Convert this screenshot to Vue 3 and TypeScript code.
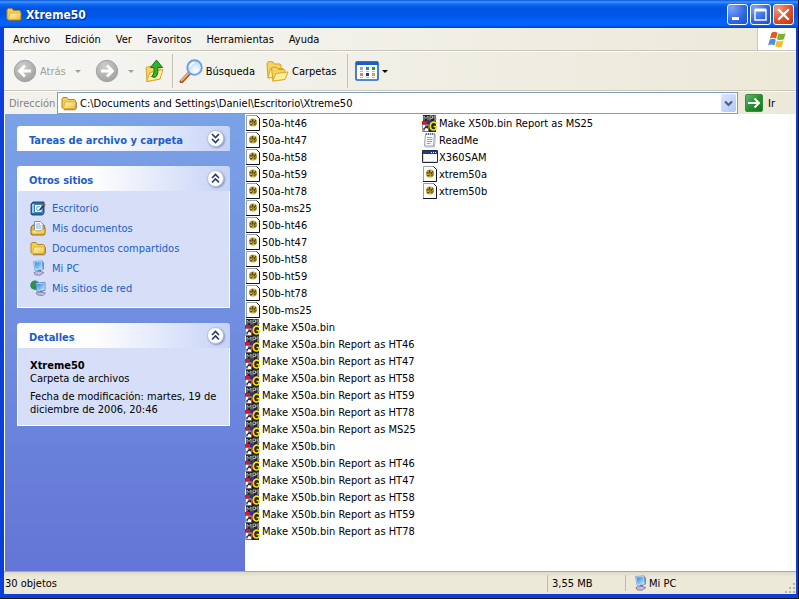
<script setup lang="ts">
import { ref } from 'vue'

interface FileItem {
  name: string
  icon: string
}

const menus: string[] = ['Archivo', 'Edición', 'Ver', 'Favoritos', 'Herramientas', 'Ayuda']

const models: string[] = ['ht46', 'ht47', 'ht58', 'ht59', 'ht78', 'ms25']
const images: FileItem[] = ['50a', '50b'].flatMap((p) =>
  models.map((m) => ({ name: `${p}-${m}`, icon: 'image' })),
)
const scripts: FileItem[] = ['X50a', 'X50b'].flatMap((p) => [
  { name: `Make ${p}.bin`, icon: 'shortcut' },
  ...models.map((m) => ({ name: `Make ${p}.bin Report as ${m.toUpperCase()}`, icon: 'shortcut' })),
])
const files: FileItem[] = [
  ...images,
  ...scripts,
  { name: 'ReadMe', icon: 'notes' },
  { name: 'X360SAM', icon: 'program' },
  { name: 'xtrem50a', icon: 'image' },
  { name: 'xtrem50b', icon: 'image' },
]

const places: FileItem[] = [
  { name: 'Escritorio', icon: 'desktop' },
  { name: 'Mis documentos', icon: 'documents' },
  { name: 'Documentos compartidos', icon: 'folder' },
  { name: 'Mi PC', icon: 'computer' },
  { name: 'Mis sitios de red', icon: 'network' },
]

const address = ref('C:\\Documents and Settings\\Daniel\\Escritorio\\Xtreme50')
const placesOpen = ref(true)
const detailsOpen = ref(true)
</script>

<template>
  <svg class="sprite" aria-hidden="true">
    <defs>
      <linearGradient id="g-folder" x1="0" y1="0" x2="1" y2="1">
        <stop offset="0" stop-color="#fff9b8" />
        <stop offset="1" stop-color="#eebd3c" />
      </linearGradient>
      <linearGradient id="g-screen" x1="0" y1="0" x2="1" y2="1">
        <stop offset="0" stop-color="#2f83e4" />
        <stop offset="1" stop-color="#a9f0ff" />
      </linearGradient>
      <radialGradient id="g-gray" cx="0.4" cy="0.3" r="0.8">
        <stop offset="0" stop-color="#cfcfcd" />
        <stop offset="1" stop-color="#9c9c9a" />
      </radialGradient>
      <radialGradient id="g-lens" cx="0.6" cy="0.7" r="0.8">
        <stop offset="0" stop-color="#ffffff" />
        <stop offset="1" stop-color="#9fd0f8" />
      </radialGradient>
      <linearGradient id="g-go" x1="0" y1="0" x2="1" y2="1">
        <stop offset="0" stop-color="#6cb870" />
        <stop offset="0.5" stop-color="#259032" />
        <stop offset="1" stop-color="#0d7417" />
      </linearGradient>
    </defs>
    <symbol id="i-folder" viewBox="0 0 16 16">
      <path d="M1 4 L2 2.5 H6 L7.5 4.5 H13.5 L14.5 5.5 V13 L13.5 14 H2.5 L1 12.5Z" fill="#f3cd55" stroke="#b5851c" />
      <path d="M2.5 13.5 L4 7 H15 L14 13.5Z" fill="url(#g-folder)" stroke="#d9a733" stroke-width="0.8" />
      <path d="M3 14.8H14.3L15.4 13.5V7" fill="none" stroke="#8a671e" stroke-width="0.8" />
    </symbol>
    <symbol id="i-documents" viewBox="0 0 16 16">
      <path d="M1 7 L3 5 H14 L15 8 V14 L14 15 H2 L1 14Z" fill="#e8b52f" stroke="#8d6a17" />
      <path d="M4.5 1.5H10.5L13 4V11H4.5Z" fill="#fff" stroke="#7790bb" />
      <path d="M6 4H10M6 6H11.5M6 8H11.5" stroke="#8ca7cf" />
      <path d="M2 10H5L6 11H11L12 9.5H14.5V14H2Z" fill="url(#g-folder)" stroke="#d7a42b" stroke-width="0.8" />
    </symbol>
    <symbol id="i-desktop" viewBox="0 0 16 16">
      <path d="M1 4 L3 2 H14 V13 L12.5 15 H2 L1 14Z" fill="#2c6a9e" stroke="#234e77" />
      <path d="M2 4 H12.5 V13 H2Z" fill="#8fcdf3" />
      <path d="M4.5 4.5 H12 V12.5 H4.5Z" fill="#f4fbff" stroke="#3b7db5" />
      <path d="M9.5 6.5 Q6.5 6 6.5 8.5 Q6.5 11 9.5 10.5" fill="none" stroke="#4b96cb" />
      <path d="M9 9.5 L13 5 L14.3 6.3 L10.2 10.5Z" fill="#173f68" />
      <path d="M13 5 L14.3 3.6 L15.7 5 L14.3 6.3Z" fill="#b84a2a" />
    </symbol>
    <symbol id="i-computer" viewBox="0 0 16 16">
      <path d="M3.5 1.5 L12 0.8 L13 9.5 L5 10.5Z" fill="#cfe5f7" stroke="#7e9dcc" stroke-width="0.8" />
      <path d="M4.6 2.6 L11.2 2 L12 8.6 L5.7 9.3Z" fill="url(#g-screen)" />
      <path d="M12 0.8 L14 3 V9 L13 9.5Z" fill="#7787bb" />
      <path d="M8 10 H11 V12 H8Z" fill="#656ca5" />
      <path d="M4 12.5 L9 11 L14 12.5 L10 15.3 L5 14.8Z" fill="#c4bddc" stroke="#7c719f" stroke-width="0.8" />
    </symbol>
    <symbol id="i-network" viewBox="0 0 16 16">
      <circle cx="5" cy="5.2" r="4.7" fill="#358fd4" />
      <path d="M1 3 Q3 0 6 0.8 L5 4 L7 6 L5 9.5 Q1 9 0.5 6Z" fill="#2f9040" />
      <path d="M6 3 L15 2.5 V10.5 L7 11.5Z" fill="#cbe7fb" stroke="#5477b3" stroke-width="0.8" />
      <path d="M7 4.2 L14 3.6 V9.6 L7.8 10.3Z" fill="url(#g-screen)" />
      <path d="M10 11 H12.5 V13 H10Z" fill="#656ca5" />
      <path d="M6 13 L11 12 L15.5 13 L13 15.5 L7.5 15Z" fill="#c4bddc" stroke="#7c719f" stroke-width="0.8" />
    </symbol>
    <symbol id="i-image" viewBox="0 0 16 17">
      <path d="M1.5 0.5H11.5L14.5 3.5V15.5H1.5Z" fill="#fff" stroke="#9aa0ae" />
      <path d="M11.5 0.5L14.5 3.5V15.5H1" fill="none" stroke="#15171c" />
      <circle cx="8" cy="7.5" r="4" fill="#b59b31" />
      <path d="M4.8 6.5L7 7.5M7.3 4.3L8 7M10.7 5.3L9 8M5.3 10L7.5 8.5" stroke="#4a3a0d" stroke-width="1.2" />
      <path d="M9 9.7L11.3 8.5" stroke="#7a5c12" stroke-width="1.4" />
      <path d="M9 5H10M5.8 8.3H7M7.5 10.3H8.5" stroke="#ecd86a" />
    </symbol>
    <symbol id="i-notes" viewBox="0 0 16 17">
      <path d="M3.5 2H12.5L11.5 14H2.5Z" fill="#fff" stroke="#8e9db1" />
      <path d="M4 2H12.5" stroke="#4e6f8f" stroke-width="2" stroke-dasharray="1 1" />
      <path d="M5 5.5H10.5M5 7.5H10.5M4.8 9.5H10M4.7 11.5H8.5" stroke="#7fa5c9" />
      <path d="M13.5 3L12.5 15H3.5" fill="none" stroke="#b5bbc4" />
    </symbol>
    <symbol id="i-program" viewBox="0 0 16 17">
      <path d="M0.5 1.5H15.5V13.5H0.5Z" fill="#fff" stroke="#242a3a" />
      <path d="M1 2H15V5H1Z" fill="#1b39a5" />
      <path d="M9 3.5H10M11 3.5H12M13 3.5H14" stroke="#fff" />
      <path d="M1.5 5.5V12.5H15" fill="none" stroke="#d0d4db" />
    </symbol>
  </svg>

  <main class="window">
    <header class="titlebar">
      <svg class="ic16"><use href="#i-folder" /></svg>
      <h1>Xtreme50</h1>
      <div class="caption">
        <button type="button" aria-label="Minimizar">
          <svg viewBox="0 0 19 19"><path d="M4 12H11V15H4Z" fill="#fff" /></svg>
        </button>
        <button type="button" aria-label="Maximizar">
          <svg viewBox="0 0 19 19"><path d="M4 5H15V15H4Z" fill="none" stroke="#fff" stroke-width="1.4" /><path d="M4 5H15" stroke="#fff" stroke-width="3" /></svg>
        </button>
        <button type="button" class="close" aria-label="Cerrar">
          <svg viewBox="0 0 19 19"><path d="M5 5L14 14M14 5L5 14" stroke="#fff" stroke-width="2.2" stroke-linecap="square" /></svg>
        </button>
      </div>
    </header>

    <nav class="menubar">
      <button v-for="m in menus" :key="m" type="button">{{ m }}</button>
      <div class="flag">
        <svg viewBox="0 0 22 20">
          <path d="M5 2.5 Q8.5 0.3 11.5 2.6 L10 9.2 Q7 7 3.2 9Z" fill="#e8562a" />
          <path d="M12.6 3.2 Q16 5 20.5 3 L18.6 9.8 Q15 11.5 11 9.7Z" fill="#77b82d" />
          <path d="M2.9 10.2 Q6.5 8.2 9.7 10.4 L8.2 16.6 Q5 14.5 1.2 16.5Z" fill="#4d8ee5" />
          <path d="M10.8 11 Q14.5 12.9 18.3 11 L16.5 17.4 Q13 19.3 9.2 17.3Z" fill="#f4bc28" />
        </svg>
      </div>
    </nav>

    <div class="toolbar">
      <button type="button" class="back" disabled>
        <svg class="ic24" viewBox="0 0 24 24">
          <circle cx="12" cy="12" r="10.7" fill="url(#g-gray)" stroke="#a3a3a1" />
          <path d="M18 12H7.5M12 6.5L6.5 12L12 17.5" fill="none" stroke="#fff" stroke-width="2.8" />
        </svg>
        <span>Atrás</span>
        <i class="arrow"></i>
      </button>
      <button type="button" class="forward" aria-label="Adelante" disabled>
        <svg class="ic24" viewBox="0 0 24 24">
          <circle cx="12" cy="12" r="10.7" fill="url(#g-gray)" stroke="#a3a3a1" />
          <path d="M6 12H16.5M12 6.5L17.5 12L12 17.5" fill="none" stroke="#fff" stroke-width="2.8" />
        </svg>
        <i class="arrow"></i>
      </button>
      <button type="button" class="up" aria-label="Arriba">
        <svg class="ic24" viewBox="0 0 24 24">
          <path d="M4 8.5L9 7L11 9L18 7.5V20L5 22.5Z" fill="#f6d460" stroke="#d8a13a" />
          <path d="M4.5 22.5L8 13.5L21 10.5L18 20Z" fill="#fff3a2" stroke="#dfa13c" />
          <path d="M12.5 18.5Q17 17 15.5 8.5H20.5L14.5 1L8.5 8.5H11.8Q13 15 9.5 17.5Z" fill="#32b32e" stroke="#15701a" />
        </svg>
      </button>
      <span class="sep"></span>
      <button type="button" class="search">
        <svg class="ic24" viewBox="0 0 24 24">
          <path d="M10.5 14L2.5 22.5" stroke="#a3572d" stroke-width="4" stroke-linecap="round" />
          <path d="M10 13.8L2.5 21.5" stroke="#efaa74" stroke-width="2" stroke-linecap="round" />
          <circle cx="15.5" cy="8.5" r="7.3" fill="url(#g-lens)" stroke="#6e9ee0" stroke-width="1.8" />
          <path d="M11 8Q11.5 4.3 15.5 3.5" stroke="#fff" stroke-width="1.5" fill="none" />
        </svg>
        <span>Búsqueda</span>
      </button>
      <button type="button" class="folders">
        <svg class="ic24" viewBox="0 0 24 24">
          <path d="M2 4L3.5 2.5L8 3L9.5 5H15L16 6V17L3 19Z" fill="#f6d35c" stroke="#d2a02c" />
          <path d="M3 19L5.5 9.5H18L16 17.5Z" fill="#fff0a0" stroke="#dba934" />
          <path d="M6.5 9L8 8L12 8.5L13.5 10.5H19L20 12V20L8 22Z" fill="#f6d35c" stroke="#d2a02c" />
          <path d="M7.5 22L11 14.5L23 13L20 20.5Z" fill="#ffef98" stroke="#dba934" />
        </svg>
        <span>Carpetas</span>
      </button>
      <span class="sep"></span>
      <button type="button" class="views" aria-label="Vistas">
        <svg class="ic24" viewBox="0 0 24 24">
          <rect x="1" y="3" width="22" height="18" rx="1" fill="#fff" stroke="#1c61c0" stroke-width="1.6" />
          <path d="M1 2.5H23V6H1Z" fill="#1761c4" />
          <path d="M5 8H8V11H5Z" fill="#a7a3b5" /><path d="M11 8H14V11H11Z" fill="#3c79d3" /><path d="M17 8H20V11H17Z" fill="#26a126" />
          <path d="M5 14H8V17H5Z" fill="#ec7b67" /><path d="M11 14H14V17H11Z" fill="#193d97" /><path d="M17 14H20V17H17Z" fill="#d7a43d" />
          <path d="M5 12.5H8M11 12.5H14M17 12.5H20M5 18.5H8M11 18.5H14M17 18.5H20" stroke="#b9bcc5" />
        </svg>
        <i class="arrow"></i>
      </button>
    </div>

    <form class="addressbar" @submit.prevent>
      <label for="address">Dirección</label>
      <div class="combo">
        <svg class="ic16"><use href="#i-folder" /></svg>
        <input id="address" v-model="address" type="text" spellcheck="false" />
        <button type="button" aria-label="Mostrar direcciones">
          <svg viewBox="0 0 15 17"><path d="M4 6.5L7.5 10L11 6.5" fill="none" stroke="#4d6185" stroke-width="2.2" /></svg>
        </button>
      </div>
      <button type="submit" class="go">
        <svg viewBox="0 0 18 18">
          <rect x="0.5" y="0.5" width="17" height="17" rx="1.5" fill="url(#g-go)" stroke="#348f3b" />
          <path d="M3 9H14M9.5 4.5L14 9L9.5 13.5" fill="none" stroke="#fff" stroke-width="2" />
        </svg>
        <span>Ir</span>
      </button>
    </form>

    <div class="content">
      <aside class="sidebar">
        <section class="panel">
          <header>
            <h2>Tareas de archivo y carpeta</h2>
            <button type="button" aria-label="Expandir">
              <svg viewBox="0 0 19 19"><path d="M6 5L9.5 8.5L13 5M6 10L9.5 13.5L13 10" /></svg>
            </button>
          </header>
        </section>

        <section class="panel">
          <header>
            <h2>Otros sitios</h2>
            <button type="button" aria-label="Contraer sitios" @click="placesOpen = !placesOpen">
              <svg viewBox="0 0 19 19"><path d="M6 9L9.5 5.5L13 9M6 13.5L9.5 10L13 13.5" /></svg>
            </button>
          </header>
          <ul v-if="placesOpen" class="body places">
            <li v-for="p in places" :key="p.name">
              <a href="#">
                <svg class="ic16"><use :href="'#i-' + p.icon" /></svg>
                <span>{{ p.name }}</span>
              </a>
            </li>
          </ul>
        </section>

        <section class="panel">
          <header>
            <h2>Detalles</h2>
            <button type="button" aria-label="Contraer detalles" @click="detailsOpen = !detailsOpen">
              <svg viewBox="0 0 19 19"><path d="M6 9L9.5 5.5L13 9M6 13.5L9.5 10L13 13.5" /></svg>
            </button>
          </header>
          <div v-if="detailsOpen" class="body details">
            <strong>Xtreme50</strong>
            <p>Carpeta de archivos</p>
            <p class="modified">Fecha de modificación: martes, 19 de diciembre de 2006, 20:46</p>
          </div>
        </section>
      </aside>

      <ul class="files">
        <li v-for="f in files" :key="f.name">
          <svg v-if="f.icon === 'shortcut'" class="ic-file" viewBox="0 0 16 17">
            <path d="M1 0H14V17H1Z" fill="#24242b" />
            <path d="M2 5.5V1L4 3.5L6 1V5.5M8 5.5V1H10.5V3.5H8M14 1H12V3H14V5H12" fill="none" stroke="#a9b2ae" />
            <path d="M0 6H5V10H0Z" fill="#d5162b" />
            <path d="M5 6H9V10H5Z" fill="#3c2698" />
            <path d="M7 10H9V14H7Z" fill="#c80b20" />
            <path d="M14.5 8.5Q13.5 7 11.5 7.2Q8.3 7.6 8.3 11.3Q8.5 15 11.5 15Q14.3 15 14.5 11.5H11.5" fill="none" stroke="#f5e500" stroke-width="1.7" />
            <path d="M0.5 9.5H6.5V16.5H0.5Z" fill="#fff" stroke="#555" stroke-width="0.6" />
            <path d="M2 15.5V13.5L4.5 12M3 11H5.3V13.5" fill="none" stroke="#111" stroke-width="1.2" />
          </svg>
          <svg v-else class="ic-file"><use :href="'#i-' + f.icon" /></svg>
          <span>{{ f.name }}</span>
        </li>
      </ul>
    </div>

    <footer class="statusbar">
      <span class="count">30 objetos</span>
      <span class="size">3,55 MB</span>
      <span class="zone">
        <svg class="ic16"><use href="#i-computer" /></svg>
        <span>Mi PC</span>
      </span>
      <svg class="grip" viewBox="0 0 12 12">
        <path d="M9 1H11V3H9ZM5 5H7V7H5ZM9 5H11V7H9ZM1 9H3V11H1ZM5 9H7V11H5ZM9 9H11V11H9Z" fill="#b8b4a2" />
      </svg>
    </footer>
  </main>
</template>

<style>
body {
  background: #16131c;
}
</style>

<style scoped>
.sprite {
  position: absolute;
  width: 0;
  height: 0;
}
.window {
  box-sizing: border-box;
  display: flex;
  flex-direction: column;
  height: calc(100vh - 1px);
  margin-right: 1px;
  border: solid #0a3fdc;
  border-width: 0 2px 4px 4px;
  background: #ece9d8;
  color: #000;
  font: 11px/13px Tahoma, 'DejaVu Sans Condensed', sans-serif;
}
button {
  display: flex;
  align-items: center;
  padding: 0;
  border: 0;
  background: none;
  color: inherit;
  font: inherit;
}
ul,
p,
h1,
h2 {
  margin: 0;
  padding: 0;
  list-style: none;
}
svg {
  display: block;
  flex: none;
}
.ic16 {
  width: 16px;
  height: 16px;
}
.ic24 {
  width: 24px;
  height: 24px;
}

.titlebar {
  display: flex;
  align-items: center;
  height: 28px;
  margin: 0 -2px 0 -4px;
  padding: 0 4px 0 6px;
  background: linear-gradient(#0a55d8 0, #3f96ff 2px, #0f6bf5 4px, #0054e3 8px, #0055e5 15px, #0264ff 22px, #0263fa 25px, #0040c4 28px);
}
.titlebar h1 {
  flex: 1;
  margin-left: 4px;
  padding-top: 2px;
  color: #fff;
  font: bold 12px/16px 'Trebuchet MS', 'DejaVu Sans Condensed', sans-serif;
  text-shadow: 1px 1px 1px #0a1f78;
}
.caption {
  display: flex;
  gap: 2px;
}
.caption button {
  box-sizing: border-box;
  width: 21px;
  height: 21px;
  border: 1px solid #fff;
  border-radius: 3px;
  background: radial-gradient(circle at 20% 15%, #7ea4f5, #2e66e5 60%, #1e50d0);
}
.caption svg {
  width: 19px;
  height: 19px;
}
.caption .close {
  background: radial-gradient(circle at 20% 15%, #f0997c, #dd4c28 60%, #bd3412);
}

.menubar {
  display: flex;
  align-items: center;
  gap: 15px;
  height: 22px;
  padding-left: 9px;
  border-bottom: 1px solid #c9c6b8;
  background: linear-gradient(90deg, #f6f6f5, #ece9d8);
}
.flag {
  display: flex;
  align-items: center;
  justify-content: center;
  align-self: stretch;
  width: 38px;
  margin-left: auto;
  border-left: 1px solid #c9c6b8;
  background: #fff;
}
.flag svg {
  width: 20px;
  height: 19px;
}

.toolbar {
  display: flex;
  align-items: center;
  height: 38px;
  padding-left: 9px;
  border-top: 1px solid #fff;
  border-bottom: 1px solid #cbc8b9;
  background: linear-gradient(90deg, #f5f5f3, #ece9d8);
}
.toolbar button {
  gap: 3px;
}
.toolbar button:disabled {
  color: #a0a09a;
}
.arrow {
  width: 0;
  height: 0;
  margin-left: 6px;
  border: solid transparent;
  border-width: 3px 3px 0;
  border-top-color: currentColor;
}
.sep {
  width: 1px;
  height: 34px;
  background: #c5c2b4;
}
.forward {
  margin-left: 14px;
}
.up {
  margin: 0 6px 0 8px;
}
.search {
  margin-left: 6px;
}
.folders {
  margin: 0 11px 0 10px;
}
.views {
  margin-left: 7px;
}
.views .arrow {
  margin-left: 0;
}

.addressbar {
  display: flex;
  align-items: center;
  height: 22px;
  border-top: 1px solid #fff;
  background: linear-gradient(90deg, #f2f1ec, #ece9d8);
}
.addressbar label {
  width: 48px;
  padding-left: 5px;
  color: #85837a;
}
.combo {
  box-sizing: border-box;
  display: flex;
  flex: 1;
  align-items: center;
  height: 22px;
  padding: 0 1px 0 3px;
  border: 1px solid #7f9db9;
  background: #fff;
}
.combo input {
  flex: 1;
  min-width: 0;
  margin-left: 3px;
  padding: 0;
  border: 0;
  outline: 0;
  background: none;
  color: #000;
  font: inherit;
}
.combo button {
  width: 15px;
  height: 18px;
  border-radius: 2px;
  background: linear-gradient(135deg, #dbe5ff, #b3c8f7);
}
.combo button svg {
  width: 15px;
  height: 17px;
}
.go {
  gap: 5px;
  width: 58px;
  padding-left: 7px;
}
.go svg {
  width: 18px;
  height: 18px;
}

.content {
  display: flex;
  flex: 1;
  min-height: 0;
  border-left: 1px solid #fff;
  background: #fff;
}
.sidebar {
  box-sizing: border-box;
  display: flex;
  flex-direction: column;
  gap: 15px;
  width: 240px;
  padding: 12px 15px 12px 12px;
  background: linear-gradient(#7ba2e7, #6375d6);
}
.panel header {
  display: flex;
  align-items: center;
  justify-content: space-between;
  height: 25px;
  padding: 0 6px 0 12px;
  border-radius: 3px 3px 0 0;
  background: linear-gradient(90deg, #fff 35%, #c6d3f7);
}
.panel h2 {
  padding-top: 3px;
  color: #215dc6;
  font: inherit;
  font-weight: bold;
}
.panel header button {
  justify-content: center;
  width: 17px;
  height: 17px;
  border: 1px solid #b4c0de;
  border-radius: 50%;
  background: #fff;
  box-shadow: 1px 1px 2px #8493bf;
}
.panel header svg {
  width: 19px;
  height: 19px;
  fill: none;
  stroke: #25396e;
  stroke-width: 1.6;
}
.body {
  border: 1px solid #fff;
  border-top: 0;
  background: #d6dff7;
}
.places {
  display: flex;
  flex-direction: column;
  gap: 4px;
  padding: 9px 12px 11px;
}
.places a {
  display: flex;
  align-items: center;
  gap: 6px;
  color: #215dc6;
  text-decoration: none;
}
.details {
  padding: 11px 12px 9px;
}
.details strong {
  display: block;
}
.modified {
  margin-top: 5px;
}

.files {
  display: grid;
  flex: 1;
  grid-auto-columns: 177px;
  grid-auto-flow: column;
  grid-template-rows: repeat(25, 17px);
  align-content: start;
  padding-top: 1px;
}
.files li {
  display: flex;
  align-items: center;
  gap: 1px;
  white-space: nowrap;
}
.ic-file {
  width: 16px;
  height: 17px;
}

.statusbar {
  display: flex;
  align-items: center;
  height: 22px;
  border-top: 1px solid #aca899;
  background: linear-gradient(#dcd9c8, #ece9d8 5px);
}
.statusbar > span {
  box-sizing: border-box;
  padding-left: 4px;
}
.count {
  flex: 1;
}
.statusbar > .count {
  padding-left: 1px;
}
.size {
  width: 78px;
  border-left: 1px solid #bdb9a8;
  line-height: 17px;
}
.zone {
  display: flex;
  gap: 1px;
  align-items: center;
  width: 159px;
  border-left: 1px solid #bdb9a8;
}
.statusbar > .zone {
  padding-left: 6px;
}
.grip {
  align-self: flex-end;
  width: 12px;
  height: 12px;
}
</style>
